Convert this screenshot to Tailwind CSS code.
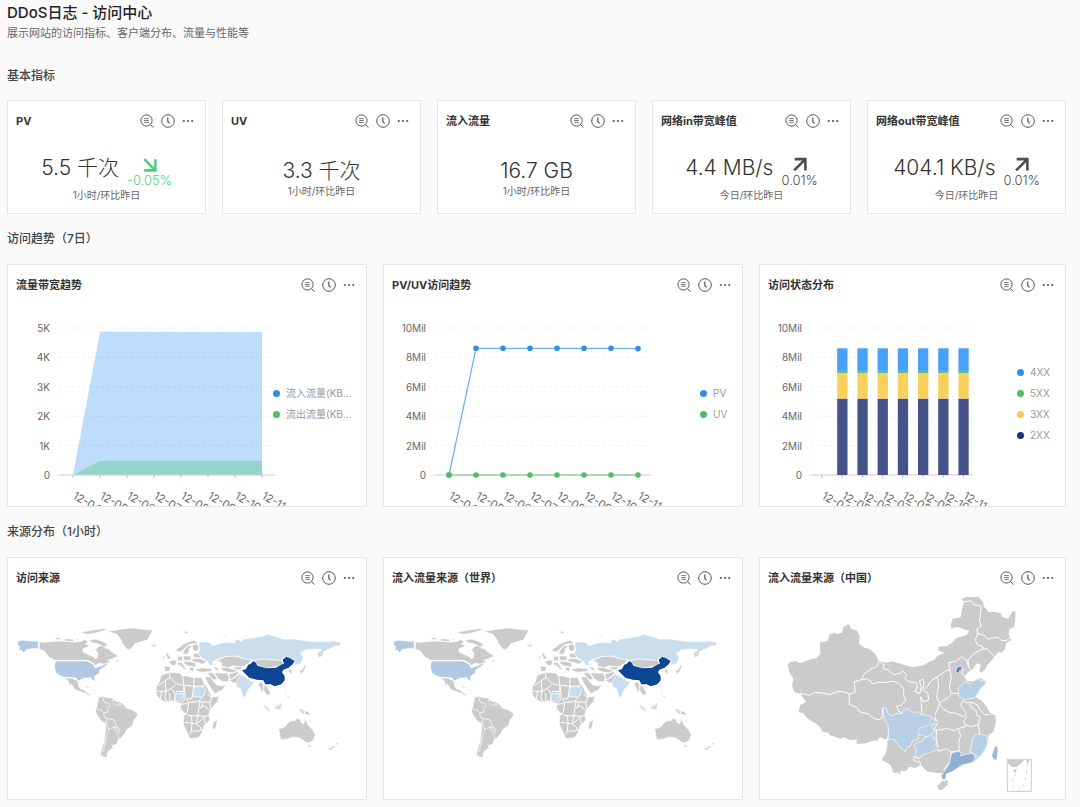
<!DOCTYPE html>
<html lang="zh-CN">
<head>
  <meta charset="UTF-8" />
  <meta name="viewport" content="width=device-width, initial-scale=1" />
  <title>DDoS日志 - 访问中心</title>
  <script src="https://cdn.jsdelivr.net/npm/@tailwindcss/browser@4"></script>
</head>
<body class="bg-[#fafafa] text-[#333] font-['Inter','Noto_Sans_CJK_SC',sans-serif]">

  <!-- Shared icons and map shapes -->
  <svg class="hidden" aria-hidden="true">
    <symbol id="icon-search" viewBox="0 0 14 14">
      <g fill="none" stroke="currentColor">
        <circle cx="6.5" cy="6.5" r="5.6" />
        <path d="M10.6 10.6L13.4 13.6" />
        <path d="M4.2 4.6h4.6M4.2 6.5h4.6M4.2 8.4h4.6" stroke-width=".8" />
      </g>
    </symbol>
    <symbol id="icon-clock" viewBox="0 0 14 14">
      <g fill="none" stroke="currentColor">
        <circle cx="7" cy="7" r="6.3" />
        <path d="M6.8 3.6v3.9l1.8 1.8" stroke-width="1.2" />
      </g>
    </symbol>
    <symbol id="icon-more" viewBox="0 0 12 14">
      <g fill="currentColor"><circle cx="1.8" cy="7" r="1.1" /><circle cx="6" cy="7" r="1.1" /><circle cx="10.2" cy="7" r="1.1" /></g>
    </symbol>

    <symbol id="world" viewBox="24 249 1074 603">
      <g fill="#cbcbcb" stroke="#fff" stroke-width="2" stroke-linejoin="round">
        <!-- North America -->
        <path d="M118 380L134 382 150 380 175 378 200 379 225 381 245 379 255 373 264 381 256 388 268 390 264 396 248 402 250 412 264 418 278 424 288 432 293 424 294 414 286 406 298 392 310 394 318 400 328 402 334 410 342 414 354 424 340 430 325 436 330 442 312 448 300 444 285 452 280 445 262 436 165 436 150 428 140 418 135 410 118 402Z" />
        <path d="M162 371L176 367 186 370 172 374ZM186 375L200 371 218 373 222 379 204 379ZM222 371L238 372 234 376ZM266 376L284 372 304 377 320 386 322 394 308 395 296 387 276 383ZM242 352L268 347 304 341 328 342 300 350 280 356 258 358ZM346 436L356 435 358 440 348 440Z" />
        <path d="M322 349L344 346 366 342 400 339 430 343 458 346 452 358 446 368 440 376 420 381 405 386 396 398 386 405 378 400 366 384 362 372 350 358Z" />
        <path d="M194 489L212 489 228 494 234 500 236 514 242 523 250 522 254 528 262 532 272 540 274 545 262 538 248 532 238 529 226 524 215 508 212 514 204 498Z" />
        <path d="M252 514L262 513 272 520 262 518ZM276 522L288 524 282 528ZM452 390L464 388 472 391 462 395Z" />
        <!-- South America -->
        <path d="M296 548L306 544 320 547 338 549 345 558 358 560 368 566 380 580 396 584 413 594 413 602 402 616 398 632 382 642 375 655 364 668 354 674 352 686 338 692 338 700 328 706 322 714 320 728 308 724 301 718 306 700 312 680 316 650 318 626 304 618 290 598 286 588 292 570Z" />
        <path fill="none" d="M308 545L312 560 330 568 332 574 322 578 324 590 312 594 312 606 322 610 340 614 348 630 356 640 358 650 350 660 360 670M336 548L340 566 354 572 366 568M358 560L356 570M290 582L304 586 312 594M322 610L318 626 326 642 344 636 356 640M326 642L320 662 314 690 310 712M344 636L346 648 356 652" />
        <!-- Africa -->
        <path d="M484 480L508 472 540 474 548 484 560 482 572 487 606 488 612 506 620 514 626 526 636 546 658 543 652 560 634 580 626 598 630 614 612 634 608 650 596 668 570 671 560 650 550 628 550 610 554 596 542 580 542 566 520 558 492 560 480 552 470 540 468 526 470 514 478 500Z" />
        <path fill="none" stroke-width="3" d="M508 474L510 488 496 496 474 514M510 488L530 506 552 512 548 484M496 496L498 530 470 528M498 530L514 520 530 506M552 512L550 530 528 530M582 486L582 514 554 510M582 514L612 512M582 514L576 550 560 552M514 520L526 536 524 558M498 530L494 546 500 560M484 530L482 552M508 534L510 558M552 512L556 550 542 570M560 552L566 562 596 560 606 546 614 538M566 562L562 590 554 598 574 602 594 602 596 580 600 562M596 560L630 562 636 546M622 536L634 548M596 580L612 572 628 586M594 602L612 604 628 602M554 622L588 626 594 602M574 602L576 626 574 650M588 626L600 618 612 604M588 626L604 640 600 648 580 648 566 656M604 640L608 650M612 604L616 628M608 564L606 578M542 568L562 566M628 560L632 580" />
        <path d="M640 620L652 613 650 630 644 644 637 640Z" />
        <!-- Europe -->
        <path d="M527 404L540 396 552 386 570 379 582 376 592 380 588 386 568 388 556 398 546 408 534 412ZM548 412L560 396 570 390 578 392 568 402 566 414 556 420ZM576 390L590 386 597 396 594 408 580 408 578 400Z" />
        <path d="M497 418L504 414 508 424 516 430 504 433ZM488 426L496 423 496 430 488 431ZM506 440L520 434 530 437 528 450 516 452ZM492 454L512 455 508 468 494 470ZM532 424L548 424 548 438 532 438ZM550 423L574 423 572 436 550 436ZM576 431L600 430 622 440 606 448 592 442 578 441ZM580 415L600 416 602 428 580 428ZM552 438L576 440 588 446 586 456 566 454 552 446ZM532 442L546 442 554 456 560 464 554 464 542 452 532 450ZM568 456L582 458 580 470 570 466ZM544 348L566 350 560 356ZM660 372L674 364 690 360 672 368Z" />
        <!-- Asia -->
        <path d="M588 462L606 458 634 461 636 469 606 472 592 469ZM638 452L652 458 660 468 646 464ZM614 484L634 486 640 500 652 510 662 512 678 510 668 524 644 536 634 522 624 506ZM622 472L640 474 652 492 642 496 630 486ZM644 472L660 474 680 474 688 486 684 500 668 500 652 490ZM686 478L706 470 718 472 706 486 690 494ZM690 496L708 486 720 476 728 482 718 494 712 506 696 502ZM662 458L684 458 696 462 716 466 700 474 684 472 666 466ZM698 456L728 455 722 466 708 464Z" />
        <path d="M650 436L664 430 680 424 705 423 720 428 754 434 748 444 738 450 728 456 700 452 684 458 664 454 666 444Z" />
        <path d="M762 436L790 430 820 434 844 434 850 446 834 454 800 460 778 454 768 446Z" />
        <path d="M774 506L784 500 790 508 792 522 784 532 780 518ZM790 512L800 512 806 524 812 534 804 542 794 532 790 524ZM862 464L872 462 878 476 870 474ZM898 470L908 462 914 448 918 452 912 468 904 476ZM852 510L857 518 854 528 858 534M856 540L868 542 866 548Z" />
        <!-- Oceania -->
        <path d="M836 642L854 636 866 622 876 616 884 618 892 610 902 614 902 622 912 626 916 610 924 630 938 644 946 660 940 676 926 684 914 680 902 670 880 666 862 672 842 674Z" />
        <path d="M922 690L934 690 928 698ZM1010 682L1016 684 1006 694ZM1002 692L1006 696 988 706 984 702ZM914 586L924 590 934 601 914 598Z" />
      </g>
      <g stroke="#fff" stroke-width="2" stroke-linejoin="round">
        <path fill="#b1c8e1" d="M53 378L70 376 92 378 115 379 115 403 104 400 90 402 78 404 72 414 66 407 55 406 60 396 53 391ZM166 438L258 438 270 442 280 448 284 458 298 454 318 446 328 444 316 454 300 464 298 474 282 486 288 500 280 496 272 488 250 490 236 498 226 488 210 487 194 487 180 482 168 474 163 456Z" />
        <path fill="#c9dded" d="M600 380L626 382 640 392 662 384 690 382 704 384 708 372 716 374 722 380 734 372 760 368 784 364 806 358 826 364 850 372 880 372 920 378 960 380 1000 378 1022 382 1020 392 1002 394 990 402 972 408 968 424 954 428 952 414 966 404 944 402 920 404 900 414 910 428 902 446 886 450 884 436 868 428 850 428 842 436 820 434 790 432 764 436 748 434 730 430 710 423 680 424 660 430 648 436 636 440 644 452 630 450 622 440 606 430 594 416 600 402 596 390Z" />
        <path fill="#c9dded" d="M712 494L724 480 738 488 752 498 764 500 756 512 744 524 734 550 728 542 722 522 708 514ZM584 516L612 514 618 526 610 544 596 546 582 546 578 534ZM526 536L552 536 548 552 538 562 526 556ZM786 564L800 574 812 588 806 590 794 578ZM822 576L836 570 842 562 846 574 840 584 826 582ZM894 580L912 584 912 600 902 592Z" />
        <path fill="#0d4693" stroke="none" d="M726 466L738 462 744 450 752 446 760 438 768 444 772 452 800 460 828 458 846 448 852 446 848 434 858 426 868 428 884 438 878 448 866 458 850 464 846 472 854 484 854 496 844 508 824 514 812 508 796 508 790 496 770 494 748 488 736 476Z" />
      </g>
    </symbol>
  </svg>

  <main class="pl-[7px] pr-[14px] pt-[3px] pb-1">
    <header>
      <h1 class="text-[15px]/5 font-medium text-[#222]">DDoS日志 - 访问中心</h1>
      <p class="text-[11px]/5 text-[#666]">展示网站的访问指标、客户端分布、流量与性能等</p>
    </header>

    <!-- Basic metrics -->
    <section>
      <h2 class="pt-[23px] pb-3.5 text-xs/5 font-medium text-[#444]">基本指标</h2>
      <div id="metrics" class="grid grid-cols-5 gap-4"></div>
    </section>

    <!-- Trends -->
    <section>
      <h2 class="py-[15px] text-xs/5 font-medium text-[#444]">访问趋势（7日）</h2>
      <div class="grid grid-cols-[360fr_360fr_307fr] gap-4">
        <article class="bg-white border border-[#e6e6e6] overflow-hidden">
          <div class="card-head flex items-center justify-between h-10 pl-2 pr-[11px]"><h3 class="text-[11px] font-bold">流量带宽趋势</h3></div>
          <div class="grid grid-cols-[265fr_93fr] items-center">
            <svg id="traffic-chart" viewBox="0 0 265 201" class="w-full overflow-visible"></svg>
            <ul id="traffic-legend" class="pb-1 space-y-[5px] text-[10px]/4 text-[#999] whitespace-nowrap"></ul>
          </div>
        </article>
        <article class="bg-white border border-[#e6e6e6] overflow-hidden">
          <div class="card-head flex items-center justify-between h-10 pl-2 pr-[11px]"><h3 class="text-[11px] font-bold">PV/UV访问趋势</h3></div>
          <div class="grid grid-cols-[316fr_42fr] items-center">
            <svg id="visit-chart" viewBox="0 0 316 201" class="w-full overflow-visible"></svg>
            <ul id="visit-legend" class="pb-1 space-y-[5px] text-[10px]/4 text-[#999] whitespace-nowrap"></ul>
          </div>
        </article>
        <article class="bg-white border border-[#e6e6e6] overflow-hidden">
          <div class="card-head flex items-center justify-between h-10 pl-2 pr-[11px]"><h3 class="text-[11px] font-bold">访问状态分布</h3></div>
          <div class="grid grid-cols-[257fr_48fr] items-center">
            <svg id="status-chart" viewBox="0 0 257 201" class="w-full overflow-visible"></svg>
            <ul id="status-legend" class="pb-1 space-y-[5px] text-[10px]/4 text-[#999] whitespace-nowrap"></ul>
          </div>
        </article>
      </div>
    </section>

    <!-- Sources -->
    <section>
      <h2 class="py-[15px] text-xs/5 font-medium text-[#444]">来源分布（1小时）</h2>
      <div class="grid grid-cols-[360fr_360fr_307fr] gap-4">
        <article class="bg-white border border-[#e6e6e6]">
          <div class="card-head flex items-center justify-between h-10 pl-2 pr-[11px]"><h3 class="text-[11px] font-bold">访问来源</h3></div>
          <svg viewBox="0 0 1074 603" class="w-full"><use href="#world" width="1074" height="603" /></svg>
        </article>
        <article class="bg-white border border-[#e6e6e6]">
          <div class="card-head flex items-center justify-between h-10 pl-2 pr-[11px]"><h3 class="text-[11px] font-bold">流入流量来源（世界）</h3></div>
          <svg viewBox="0 0 1074 603" class="w-full"><use href="#world" width="1074" height="603" /></svg>
        </article>
        <article class="bg-white border border-[#e6e6e6]">
          <div class="card-head flex items-center justify-between h-10 pl-2 pr-[11px]"><h3 class="text-[11px] font-bold">流入流量来源（中国）</h3></div>
          <svg viewBox="30 144 915 603" class="w-full overflow-visible">
            <g fill="#cbcbcb" stroke-linejoin="round">
              <path d="M113 346L120 336 142 334 146 340 168 334 184 328 200 324 212 310 210 294 210 276 232 274 240 252 252 248 262 252 276 248 280 232 296 222 304 236 322 242 330 262 326 280 340 292 360 298 376 312 386 332 408 338 426 334 440 338 468 346 488 352 520 346 536 336 552 330 562 318 576 312 584 308 566 302 564 290 592 288 608 276 620 264 650 254 658 242 640 238 622 230 604 236 602 224 608 206 632 202 636 176 642 160 636 146 652 140 664 142 684 140 698 154 702 170 716 186 736 186 752 190 756 200 774 206 786 186 796 182 796 210 792 232 778 236 776 254 784 270 768 280 766 296 756 308 744 306 736 318 722 334 712 344 706 358 694 368 688 362 692 344 680 340 668 358 654 366 644 380 650 394 676 392 690 384 710 394 696 410 684 430 678 442 696 452 710 470 720 490 736 496 738 516 730 546 716 556 714 580 704 604 684 624 670 636 640 646 620 656 606 666 588 672 588 688 576 688 576 670 552 668 530 664 512 644 496 654 478 650 468 664 452 662 450 676 444 668 430 668 422 646 408 636 394 630 406 612 412 590 412 570 390 562 382 572 368 572 348 580 320 582 320 568 300 570 280 562 272 566 240 556 236 548 218 546 210 530 196 520 170 504 160 490 146 486 150 466 168 456 152 432 132 426 126 408 130 386 118 366Z" />
              <path d="M562 708L576 694 594 690 592 706 576 720 564 718Z" />
            </g>
            <!-- province borders -->
            <g fill="none" stroke="#fff" stroke-width="3" stroke-linejoin="round">
              <path d="M150 430L178 436 194 428 210 428 240 434 258 426 274 424 300 432 316 426 312 396 336 388 342 372 360 358 380 350 388 332" />
              <path d="M298 430L298 464 320 472 330 486 356 492 370 504 386 510 396 504 398 474M418 530L412 572" />
              <path d="M336 390L352 386 370 402 386 396 400 398 430 394 450 402 462 418 460 436 468 450 454 466 440 468 446 484 456 488" />
              <path d="M386 334L402 344 400 356 416 360 430 374 452 370 458 362 470 376 464 386 480 396 500 398 502 412 494 424 510 430 514 410 508 392 520 388 522 404 516 418 534 430 536 450 520 456 512 440 514 460 516 490 510 494" />
              <path d="M522 416L530 412 544 392 562 380 590 362 600 360 596 338 620 334 634 320 650 332 656 350 664 362M562 380L566 410 560 440 568 460 562 480 554 496" />
              <path d="M600 360L604 384 598 410 604 432 590 446 568 458M604 430L624 430M568 460L580 478 600 488 620 490 640 500 650 492 640 478 632 464 640 450" />
              <path d="M656 350L654 328 662 322 674 308 702 296 696 288 680 284 676 268 684 250 680 238 694 228 688 212 690 200 694 168 672 164 662 152 640 156M680 250L704 256 712 268 726 264 744 262 756 272 768 272 782 262M702 296L714 298 722 308 734 322" />
              <path d="M556 500L560 524 550 540 570 540 590 534 610 542 626 536 650 526 640 516 650 500M640 456L664 458 660 468 680 484 678 494 692 502 684 524 664 530 650 526M664 456L684 466 690 480 704 494 718 494M684 524L690 550 668 564M624 538L632 556 626 580 628 602 604 606 590 596 564 604M560 540L558 560 564 590M520 614L508 626 492 620 490 632 510 636 512 648M648 528L640 534M604 606L600 636 580 660M640 356L636 370 648 384" />
            </g>
            <g stroke="#fff" stroke-width="2" stroke-linejoin="round">
              <path fill="#b8cfe6" d="M397 474L408 474 412 488 426 498 440 490 454 492 460 480 474 476 486 486 504 486 514 494 536 496 548 502 552 510 564 512 562 522 548 522 544 534 556 542 546 552 530 562 516 554 504 556 506 566 488 572 480 590 472 590 466 604 448 590 434 568 416 568 414 524 404 510Z" />
              <path fill="none" stroke="#dce9f6" stroke-width="3" d="M548 502L538 512 542 524 526 530 512 532 504 546 508 558" />
              <path fill="#b8cfe6" d="M492 584L506 576 516 576 522 564 534 560 544 552 550 566 560 570 558 586 566 598 548 604 530 612 520 614 508 624 496 614 500 602ZM668 564L680 552 692 552 714 560 712 584 700 606 684 626 676 614 660 606ZM628 440L624 416 634 408 644 396 660 400 670 394 682 386 692 392 710 394 706 404 694 412 682 434 672 444 658 446 646 450Z" />
              <path fill="#8fb0d3" d="M604 610L622 604 634 608 632 618 650 612 670 610 676 624 670 636 650 642 634 646 620 656 604 666 588 672 588 688 576 688 574 676 586 660 598 640Z" />
              <path fill="#98b9da" d="M734 592L742 586 744 602 740 632 730 628 725 616Z" />
              <path fill="#5389c3" stroke="#dce9f6" stroke-width="3" d="M619 354L626 350 634 348 636 356 630 362 626 371 617 366Z" />
            </g>
            <!-- South China Sea inset -->
            <g fill="none" stroke="#cbcbcb" stroke-width="3">
              <rect x="772" y="628" width="72" height="96" />
              <path fill="#cbcbcb" stroke="none" d="M774 630L822 630 814 640 800 650 786 652 774 640ZM828 630L838 630 834 644ZM790 660L800 656 798 666 792 668Z" />
              <path stroke-width="2" stroke-dasharray="10 10" d="M798 668L788 690 788 708 800 722M832 642L828 680 818 712 806 722" />
            </g>
          </svg>
        </article>
      </div>
    </section>
  </main>

  <script>
    const metrics = [
      { name: 'PV', value: '5.5 千次', note: '1小时/环比昨日', trend: '-0.05%', down: true },
      { name: 'UV', value: '3.3 千次', note: '1小时/环比昨日' },
      { name: '流入流量', value: '16.7 GB', note: '1小时/环比昨日' },
      { name: '网络in带宽峰值', value: '4.4 MB/s', note: '今日/环比昨日', trend: '0.01%' },
      { name: '网络out带宽峰值', value: '404.1 KB/s', note: '今日/环比昨日', trend: '0.01%' }
    ];
    const days = ['12-04', '12-05', '12-06', '12-07', '12-08', '12-09', '12-10', '12-11'];
    const BASE = 170; // y of the zero line
    const HEIGHT = 147;

    function trendHtml(m) {
      if (!m.trend) return '';
      const arrow = m.down ? 'M2 2L12 12M12.500 2V12.500H2' : 'M2 12.500L12 2.500M2.500 2H12.500V12.500';
      return `
        <div class="flex flex-col items-center ${m.down ? 'text-[#52cf7e]' : 'text-[#4d4d4d]'}">
          <svg viewBox="0 0 14 14" class="size-[17px] p-px" fill="none" stroke="currentColor" stroke-width="2.400"><path d="${arrow}" /></svg>
          <span class="text-[13px]/[14px] font-light">${m.trend}</span>
        </div>`;
    }

    document.getElementById('metrics').innerHTML = metrics.map(m => `
      <article class="bg-white border border-[#e6e6e6]">
        <div class="card-head flex items-center justify-between h-10 pl-2 pr-[11px]"><h3 class="text-[11px] font-bold">${m.name}</h3></div>
        <div class="flex flex-col items-center justify-center h-[72px] pt-1">
          <div class="flex items-start gap-2">
            <p class="text-[21px]/6 font-light text-[#333] whitespace-nowrap">${m.value}</p>${trendHtml(m)}
          </div>
          <p class="text-[10px]/4 text-[#666]">${m.note}</p>
        </div>
      </article>`).join('');

    document.querySelectorAll('.card-head').forEach(head => {
      head.insertAdjacentHTML('beforeend', `
        <div class="flex items-center gap-[7px] text-[#555]">
          <button type="button" aria-label="查询"><svg class="block size-3.5"><use href="#icon-search" /></svg></button>
          <button type="button" aria-label="时间"><svg class="block size-3.5"><use href="#icon-clock" /></svg></button>
          <button type="button" aria-label="更多"><svg class="block w-3 h-3.5"><use href="#icon-more" /></svg></button>
        </div>`);
    });

    function legend(id, items) {
      document.getElementById(id).innerHTML = items.map(([name, color]) => `
        <li class="flex items-center gap-1.5"><span class="size-[7px] rounded-full" style="background:${color}"></span>${name}</li>`).join('');
    }

    // grid lines, y labels, ticks and slanted day labels
    function axes(labels, right, first, step, ticks) {
      const gap = HEIGHT / (labels.length - 1);
      let out = '';
      labels.forEach((label, i) => {
        const y = BASE - i * gap;
        out += `<text x="42" y="${y + 4}" text-anchor="end" class="text-[10px] fill-[#666]">${label}</text>`;
        out += i
          ? `<path d="M51 ${y}H${right}" stroke="#000" stroke-opacity=".1" stroke-dasharray="3 3" stroke-width=".7" />`
          : `<path d="M51 ${y}H${right}" stroke="#ccc" />`;
      });
      days.forEach((day, i) => {
        const x = first + i * step;
        if (ticks) out += `<path d="M${x} ${BASE}v3" stroke="#bbb" />`;
        out += `<text transform="translate(${x - 1} 193) rotate(30)" class="text-[11px] fill-[#666]">${day}</text>`;
      });
      return out;
    }

    document.getElementById('traffic-chart').innerHTML = `
      <path d="M65 170L92 26.700 254 27V170Z" fill="#bedcfb" />
      <path d="M65 170L92 155.700H254V170Z" fill="#95d4cb" />
      ${axes(['0', '1K', '2K', '3K', '4K', '5K'], 267, 65, 27, true)}`;
    legend('traffic-legend', [['流入流量(KB...', '#2f8fee'], ['流出流量(KB...', '#52bd63']]);

    function line(values, color) {
      const pts = values.map((v, i) => [65 + i * 27, BASE - v / 10 * HEIGHT]);
      return `<polyline points="${pts.join(' ')}" fill="none" stroke="${color}" stroke-opacity=".7" stroke-width="1.200" />`
        + pts.map(p => `<circle cx="${p[0]}" cy="${p[1]}" r="2.800" fill="${color}" />`).join('');
    }
    const mil = ['0', '2Mil', '4Mil', '6Mil', '8Mil', '10Mil'];
    document.getElementById('visit-chart').innerHTML = axes(mil, 267, 65, 27, false)
      + line([0, 8.62, 8.62, 8.62, 8.62, 8.62, 8.62, 8.6], '#2f8fee')
      + line([0, 0, 0, 0, 0, 0, 0, 0], '#52bd63');
    legend('visit-legend', [['PV', '#2f8fee'], ['UV', '#52bd63']]);

    // each stack is listed from the bottom up, as [value, colour]
    const stack = [[5.2, '#46528a'], [1.74, '#f8d05e'], [0.14, '#5cc282'], [1.54, '#48a0f8']];
    let bars = '';
    for (let i = 1; i < days.length; i++) {
      let y = BASE;
      stack.forEach(([v, color]) => {
        const h = v / 10 * HEIGHT;
        y -= h;
        bars += `<rect x="${57 + i * 20.2}" y="${y}" width="10.300" height="${h}" fill="${color}" />`;
      });
    }
    document.getElementById('status-chart').innerHTML = axes(mil, 213, 62, 20.2, true) + bars;
    legend('status-legend', [['4XX', '#2f8ff5'], ['5XX', '#52bd63'], ['3XX', '#f6c94f'], ['2XX', '#1f2f72']]);
  </script>
</body>
</html>
